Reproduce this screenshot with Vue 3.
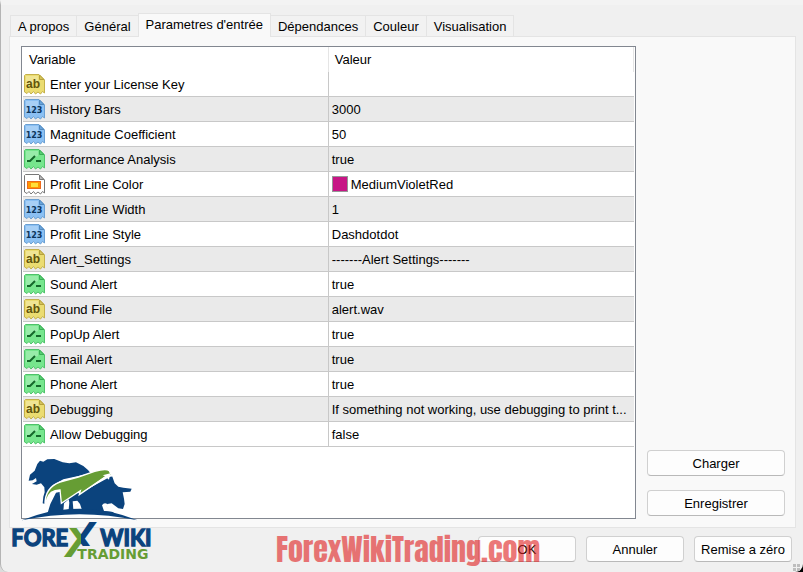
<template>
  <main class="dialog">
    <nav class="tabs" role="tablist">
      <button
        v-for="tab in tabs"
        :key="tab"
        type="button"
        role="tab"
        class="tab"
        :class="{ active: tab === activeTab }"
        :aria-selected="tab === activeTab"
        @click="activeTab = tab"
      >
        {{ tab }}
      </button>
    </nav>

    <section class="panel">
      <div class="table-box">
        <table class="inputs">
          <thead>
            <tr>
              <th class="col-name">Variable</th>
              <th>Valeur</th>
            </tr>
          </thead>
          <tbody>
            <tr v-for="row in rows" :key="row.name">
              <td>
                <div class="name-cell">
                  <svg class="icon" viewBox="0 0 22 22" :class="row.type" aria-hidden="true">
                    <path class="paper" d="M2.5 1.5H16L21.5 7V20L19.5 18.5L17.5 21L15 19L12.500 21L10.500 18.500L8 21L6 18.500L4 20.500L1.500 19V2.500Z" />
                    <path class="shine" d="M3 3H15V8Q8 10 3 15Z" />
                    <path class="fold" d="M16.500 2V6.500H21Z" />
                    <text v-if="row.type === 'string'" class="glyph ab" x="10" y="15" text-anchor="middle">ab</text>
                    <text v-if="row.type === 'number'" class="glyph num" x="11" y="15" text-anchor="middle">123</text>
                    <path v-if="row.type === 'bool'" class="mark" d="M4 13H7L12 8M13 13H18" />
                    <g v-if="row.type === 'color'">
                      <rect x="4" y="8" width="14" height="8" fill="#ee6a1c" />
                      <rect x="5" y="9" width="12" height="6" fill="#ff9800" />
                      <rect x="8" y="10" width="7" height="4" fill="#ffdf3c" />
                    </g>
                  </svg>
                  <span>{{ row.name }}</span>
                </div>
              </td>
              <td>
                <div class="value-cell">
                  <span v-if="row.type === 'color'" class="swatch"></span>{{ row.value }}
                </div>
              </td>
            </tr>
          </tbody>
        </table>
      </div>
      <div class="side">
        <button type="button" class="btn">Charger</button>
        <button type="button" class="btn">Enregistrer</button>
      </div>
    </section>

    <footer class="actions">
      <button type="button" class="btn">OK</button>
      <button type="button" class="btn">Annuler</button>
      <button type="button" class="btn">Remise a zéro</button>
    </footer>

    <svg class="logo" viewBox="30 48 423 312" role="img" aria-label="Forex Wiki Trading">
      <defs>
        <linearGradient id="cross-fill" x1="0" y1="0" x2="1" y2="0">
          <stop offset="0.5" stop-color="#669d34" />
          <stop offset="0.5" stop-color="#0b437d" />
        </linearGradient>
        <clipPath id="cross-clip">
          <path d="M240 238H300V318H238V360H180V264H240Z" />
        </clipPath>
      </defs>
      <!-- bear -->
      <path class="blue" d="M86 122L90 104L104 92L112 72L120 62L130 65L142 58L163 57L188 67L208 70L228 67L250 78L264 90L272 100L235 108L190 118L160 135L144 158L134 192L128 190L130 170L134 157L133 142L123 130L110 134L96 132L110 124L108 114L98 121Z" />
      <!-- bear legs and bull -->
      <path class="blue" d="M143 218L151 192L168 158L182 155L240 160L336 107L344 130L355 140L370 143L395 146L391 155L368 157L372 176L374 192L369 207L355 205L335 190L322 192L318 200L330 210L346 222H143Z" />
      <path class="white" d="M190 212L192 190L206 178L208 188L206 208Z" />
      <path class="white" d="M220 208L218 184L232 182L240 192L246 210Z" />
      <path class="white" d="M312 213L306 196Q312 186 322 192L320 200L344 216Z" />
      <path class="green" d="M135 195C134 160 150 137 180 126L235 111L284 94Q318 84 328 92L335 108L322 106L238 164L241 152L184 190L180 150Q148 150 140 180Z" />
      <path class="white" d="M308 106L331 100L327 119L320 113L240 162L316 109Z" />
      <path class="blue" d="M65 241Q238 172 413 241Q238 204 65 241Z" />
      <text class="word" x="34" y="317">FORE</text>
      <text class="word" x="301" y="317">WIKI</text>
      <g clip-path="url(#cross-clip)">
        <text class="cross" x="194" y="347">X</text>
      </g>
      <text class="trading" x="232" y="356">TRADING</text>
    </svg>

    <div class="watermark">ForexWikiTrading.com</div>
    <div class="grip"><i></i><i></i><i></i><i></i></div>
  </main>
</template>

<script setup>
import { ref } from 'vue';

const tabs = ['A propos', 'Général', "Parametres d'entrée", 'Dépendances', 'Couleur', 'Visualisation'];
const activeTab = ref("Parametres d'entrée");

const rows = [
  { name: 'Enter your License Key', type: 'string', value: '' },
  { name: 'History Bars', type: 'number', value: '3000' },
  { name: 'Magnitude Coefficient', type: 'number', value: '50' },
  { name: 'Performance Analysis', type: 'bool', value: 'true' },
  { name: 'Profit Line Color', type: 'color', value: 'MediumVioletRed' },
  { name: 'Profit Line Width', type: 'number', value: '1' },
  { name: 'Profit Line Style', type: 'number', value: 'Dashdotdot' },
  { name: 'Alert_Settings', type: 'string', value: '-------Alert Settings-------' },
  { name: 'Sound Alert', type: 'bool', value: 'true' },
  { name: 'Sound File', type: 'string', value: 'alert.wav' },
  { name: 'PopUp Alert', type: 'bool', value: 'true' },
  { name: 'Email Alert', type: 'bool', value: 'true' },
  { name: 'Phone Alert', type: 'bool', value: 'true' },
  { name: 'Debugging', type: 'string', value: 'If something not working, use debugging to print t...' },
  { name: 'Allow Debugging', type: 'bool', value: 'false' }
];
</script>

<style>
body { margin: 0; background: linear-gradient(to right, #dcdcdc 50%, #000 50%); }
</style>

<style scoped>
.dialog {
  position: relative;
  box-sizing: border-box;
  min-height: 100vh;
  padding: 8px 7px 10px 8px;
  border-top: 5px solid #f3f3f3;
  border-left: 1px solid #b4b4b4;
  border-radius: 0 0 8px 8px;
  background: #f0f0f0;
  font-family: "Liberation Sans", Arial, sans-serif;
  font-size: 13px;
  color: #000;
}

.tabs { display: flex; align-items: flex-end; height: 23px; padding-left: 2px; }
.tab {
  height: 21px;
  margin: 0 0 0 -1px;
  padding: 0 7px;
  border: 1px solid #e4e4e4;
  border-bottom: none;
  background: #f2f2f2;
  font: inherit;
  color: inherit;
}
.tab.active {
  position: relative;
  height: 24px;
  margin-bottom: -1px;
  padding: 0 7px 2px;
  background: #f9f9f9;
}

.panel {
  display: flex;
  gap: 11px;
  padding: 9px 10px 8px 11px;
  border: 1px solid #e4e4e4;
  background: #f9f9f9;
}
.table-box {
  flex: 1;
  box-sizing: border-box;
  min-height: 473px;
  padding: 0 1px;
  border: 1px solid #828790;
  background: #fff;
}
.inputs { width: 100%; table-layout: fixed; border-collapse: collapse; }
.inputs th { height: 25px; padding: 0 6px; text-align: left; font-weight: normal; border-right: 1px solid #e5e5e5; }
.inputs .col-name { width: 50%; box-sizing: border-box; }
.inputs td { height: 24px; padding: 0; border-bottom: 1px solid #c8c8c8; }
.inputs td:first-child { border-right: 1px solid #c8c8c8; }
.inputs tbody tr:nth-child(even) { background: #eaeaea; }
.name-cell { display: flex; align-items: center; gap: 5px; height: 24px; }
.value-cell { display: flex; align-items: center; gap: 3px; height: 24px; padding-left: 3px; white-space: nowrap; overflow: hidden; }
.swatch { box-sizing: border-box; width: 16px; height: 16px; border: 1px solid #969696; background: #c71585; }

.icon { width: 22px; height: 22px; flex-shrink: 0; }
.icon .shine { fill: #fff; opacity: 0.25; }
.string .paper { fill: #ebdc70; stroke: #c4b04a; }
.string .fold { fill: #d5c45c; stroke: #b5a13a; }
.number .paper { fill: #8bc0f3; stroke: #6a9fd2; }
.number .fold { fill: #6aa5dc; stroke: #5289bd; }
.bool .paper { fill: #76e68d; stroke: #4fc26a; }
.bool .fold { fill: #58cf74; stroke: #39ae54; }
.color .paper { fill: #fff; stroke: #777; }
.color .fold { fill: #bbb; stroke: #777; }
.mark { fill: none; stroke: #14682a; stroke-width: 2; }
.glyph { font-family: "Liberation Sans", sans-serif; font-weight: bold; }
.ab { font-size: 12px; fill: #61540c; }
.num { font-family: "DejaVu Sans", sans-serif; font-size: 8px; fill: #0d355c; }

.side { display: flex; flex-direction: column; justify-content: flex-end; gap: 14px; width: 138px; padding-bottom: 3px; }
.actions { display: flex; justify-content: flex-end; gap: 10px; padding: 8px 4px 0 0; }
.btn {
  height: 26px;
  padding: 0;
  border: 1px solid #d0d0d0;
  border-bottom-color: #b9b9b9;
  border-radius: 4px;
  background: #fdfdfd;
  font: inherit;
  color: inherit;
}
.actions .btn { width: 98px; }

.logo { position: absolute; left: 9px; bottom: 12px; width: 141px; height: 104px; overflow: visible; }
.logo .blue { fill: #0b437d; }
.logo .green { fill: #669d34; stroke: #fff; stroke-width: 4; }
.logo .white { fill: #fff; }
.word { font-family: Lato, sans-serif; font-weight: bold; font-size: 66px; fill: #0b437d; stroke: #0b437d; stroke-width: 4; }
.cross { font-family: "Liberation Sans", sans-serif; font-size: 144px; fill: url(#cross-fill); stroke: url(#cross-fill); stroke-width: 6; }
.trading { font-family: "DejaVu Sans", sans-serif; font-weight: bold; font-size: 42px; fill: #669d34; }

.watermark {
  position: absolute;
  left: 275px;
  bottom: 4px;
  font-family: Impact, Anton, "Roboto Condensed", "Open Sans Condensed", "Liberation Sans", sans-serif;
  font-size: 30px;
  line-height: 36px;
  font-weight: normal;
  color: #e02020;
  opacity: 0.6;
  pointer-events: none;
}

.grip { position: absolute; right: 3px; bottom: 1px; display: grid; grid-template-columns: 3px 3px; gap: 1px; }
.grip i { width: 3px; height: 3px; background: #bdbdbd; }
</style>
